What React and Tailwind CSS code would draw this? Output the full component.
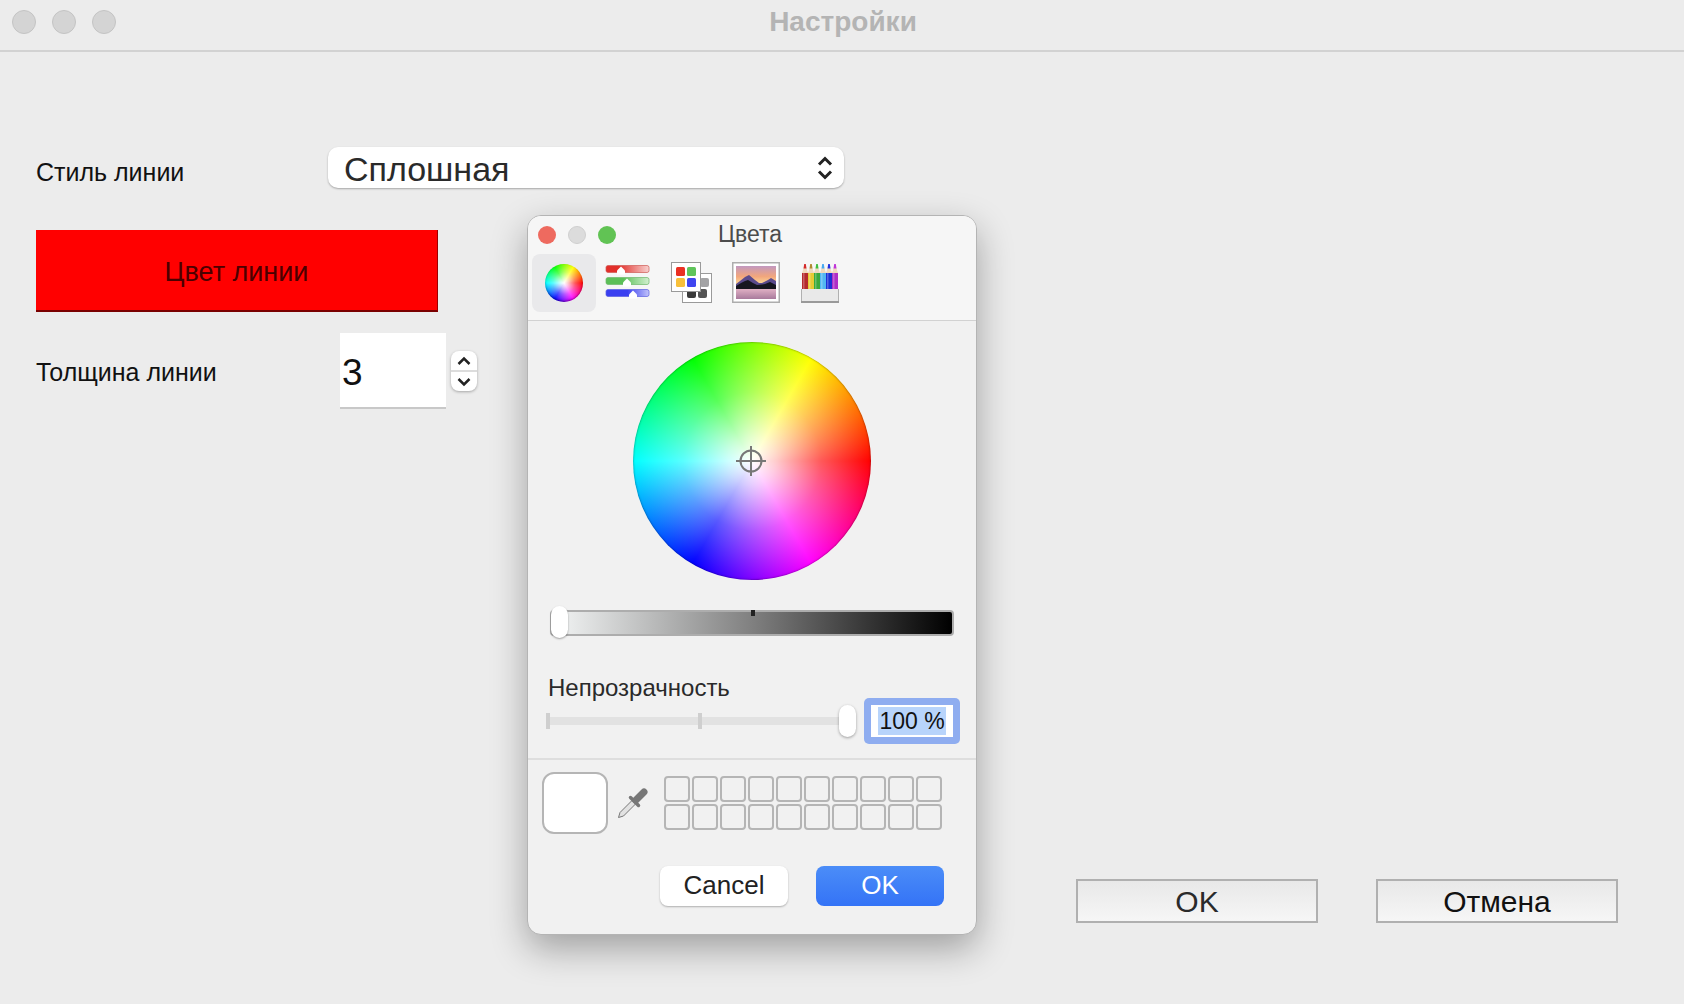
import React from "react";

const WHEEL =
  "bg-[radial-gradient(circle_closest-side,#ffffff_0%,rgba(255,255,255,0.8)_20%,rgba(255,255,255,0.35)_58%,rgba(255,255,255,0)_100%),conic-gradient(from_90deg,#ff0000,#ff00ff,#0000ff,#00ffff,#00ff00,#ffff00,#ff0000)]";

const Dot = ({ className }) => <div className={`rounded-full ${className}`} />;

const SliderIcon = () => (
  <svg width="46" height="36" viewBox="0 0 46 36" className="block">
    <defs>
      <linearGradient id="sr" x1="0" x2="1" y1="0" y2="0">
        <stop offset="0.3" stopColor="#e22f2a" />
        <stop offset="1" stopColor="#f8d2d0" />
      </linearGradient>
      <linearGradient id="sg" x1="0" x2="1" y1="0" y2="0">
        <stop offset="0.4" stopColor="#5cbf58" />
        <stop offset="1" stopColor="#d2f0d0" />
      </linearGradient>
      <linearGradient id="sb" x1="0" x2="1" y1="0" y2="0">
        <stop offset="0.5" stopColor="#3a3ff0" />
        <stop offset="1" stopColor="#c2c4fa" />
      </linearGradient>
    </defs>
    <rect x="1" y="1.500" width="43" height="7" rx="2" fill="url(#sr)" stroke="#cf5a55" strokeWidth="0.7" />
    <rect x="1" y="13.500" width="43" height="7" rx="2" fill="url(#sg)" stroke="#6fb86b" strokeWidth="0.7" />
    <rect x="1" y="25.500" width="43" height="7" rx="2" fill="url(#sb)" stroke="#5a5ee0" strokeWidth="0.7" />
    <path d="M16 2.500l4 4v4h-8v-4z" fill="#fff" />
    <path d="M22 14.500l4 4v4h-8v-4z" fill="#fff" />
    <path d="M28 26.500l4 4v4h-8v-4z" fill="#fff" />
  </svg>
);

const PaletteIcon = () => (
  <svg width="42" height="41" viewBox="0 0 42 41" className="block">
    <rect x="11.500" y="11.500" width="29" height="29" fill="#fff" stroke="#9a9a9a" />
    <rect x="29" y="16" width="9" height="9" rx="2" fill="#a3a3a5" />
    <rect x="16" y="27" width="9" height="9" rx="2" fill="#3a3a3a" />
    <rect x="27" y="27" width="9" height="9" rx="2" fill="#555" />
    <rect x="0.500" y="0.500" width="29" height="29" fill="#fff" stroke="#9a9a9a" />
    <rect x="5" y="5" width="9" height="9" rx="1.500" fill="#ea3023" />
    <rect x="16" y="5" width="9" height="9" rx="1.500" fill="#5fc45a" />
    <rect x="5" y="16" width="9" height="9" rx="1.500" fill="#f8c03a" />
    <rect x="16" y="16" width="9" height="9" rx="1.500" fill="#3f45f0" />
  </svg>
);

const LandscapeIcon = () => (
  <svg width="48" height="41" viewBox="0 0 48 41" className="block">
    <defs>
      <linearGradient id="sky" x1="0" x2="0" y1="0" y2="1">
        <stop offset="0" stopColor="#c298c0" />
        <stop offset="0.55" stopColor="#f2a67c" />
        <stop offset="1" stopColor="#ffe09a" />
      </linearGradient>
      <linearGradient id="lake" x1="0" x2="0" y1="0" y2="1">
        <stop offset="0" stopColor="#e0b0c4" />
        <stop offset="1" stopColor="#a87a9c" />
      </linearGradient>
    </defs>
    <rect x="0.750" y="0.750" width="46.500" height="39.500" fill="#fff" stroke="#adadad" strokeWidth="1.500" />
    <rect x="4" y="4" width="40" height="19" fill="url(#sky)" />
    <path d="M4 22l4-3 5-4 4-2 6 5 4 3 3 0 6-3 3-2 5 3v7H4z" fill="#5a4a8c" />
    <path d="M4 24l5-3 4-2 3-1 5 3 4 2 8-1 5-2 6 3v4H4z" fill="#16161f" />
    <rect x="4" y="27" width="40" height="10" fill="url(#lake)" />
  </svg>
);

const PencilsIcon = () => {
  const colors = [
    ["#b52a2c", "#d42a2a"],
    ["#e6cb33", "#b08a30"],
    ["#3aa93c", "#3fbf3f"],
    ["#52b7f2", "#45a8f0"],
    ["#1c30d6", "#2230e0"],
    ["#ae2ec6", "#c035d8"],
  ];
  return (
    <svg width="38" height="40" viewBox="0 0 38 40" className="block">
      {colors.map(([body, lead], i) => {
        const x = i * 6 + 1;
        return (
          <g key={body}>
            <path d={`M${x} 10L${x + 2} 4h2L${x + 6} 10z`} fill="#efd9bc" />
            <path d={`M${x + 1.500} 5.500L${x + 2.200} 1h1.600L${x + 4.500} 5.500z`} fill={lead} />
            <rect x={x} y="10" width="6" height="17" fill={body} />
            <rect x={x + 1} y="10" width="1.500" height="17" fill="#fff" opacity="0.25" />
          </g>
        );
      })}
      <rect x="0.500" y="26" width="37" height="13" fill="#e9e9e9" />
      <path d="M0.500 26v13h37V26" fill="none" stroke="#b0b0b0" />
      <rect x="0" y="38" width="38" height="2" fill="#9a9a9a" />
    </svg>
  );
};

const Dropper = () => (
  <svg width="32" height="32" viewBox="0 0 32 32" className="block">
    <path d="M1.500 30.500L3 25.500 15 13.500l3.500 3.500-12 12z" fill="#e2e2e2" stroke="#777" strokeWidth="1" />
    <path d="M13.500 10.500l8 8" stroke="#777" strokeWidth="3.500" strokeLinecap="round" />
    <path d="M19 13l8-8" stroke="#777" strokeWidth="7" strokeLinecap="round" />
  </svg>
);

const Crosshair = () => (
  <svg width="32" height="32" viewBox="0 0 32 32" className="block">
    <circle cx="16" cy="16" r="10.500" fill="none" stroke="#777" strokeWidth="2" />
    <path d="M1 16h30M16 1v30" stroke="#777" strokeWidth="2" />
  </svg>
);

const ColorPanel = () => (
  <div className="absolute left-[527px] top-[215px] flex h-[720px] w-[450px] flex-col overflow-hidden rounded-[14px] border border-[#b4b4b4] bg-[#f1f1f1] shadow-[0_14px_36px_rgba(0,0,0,0.32)]">
    <div className="h-[105px] shrink-0 border-b border-b-[#d2d2d2] bg-[#f6f6f6]">
      <div className="relative flex h-[38px] items-center pl-[10px]">
        <div className="flex gap-[12px]">
          <Dot className="h-[18px] w-[18px] bg-[#ee6a5f]" />
          <Dot className="h-[18px] w-[18px] bg-[#dcdcdc] border border-[#cfcfcf]" />
          <Dot className="h-[18px] w-[18px] bg-[#61c354]" />
        </div>
        <div className="absolute inset-x-0 top-[5px] pr-[4px] text-center text-[23px] leading-[26px] text-[#4c4c4c]">
          Цвета
        </div>
      </div>
      <div className="flex h-[58px] items-start pl-[4px]">
        <div className="flex h-[58px] w-[64px] items-center justify-center rounded-[8px] bg-[#e9e9eb]">
          <div className={`h-[38px] w-[38px] rounded-full ${WHEEL} shadow-[inset_0_-1px_2px_rgba(0,0,0,0.4)]`} />
        </div>
        <div className="ml-[9px] mt-[10px]">
          <SliderIcon />
        </div>
        <div className="ml-[20px] mt-[8px]">
          <PaletteIcon />
        </div>
        <div className="ml-[19px] mt-[8px]">
          <LandscapeIcon />
        </div>
        <div className="ml-[21px] mt-[9px]">
          <PencilsIcon />
        </div>
      </div>
    </div>

    <div className="flex justify-center pt-[21px]">
      <div className={`flex h-[238px] w-[238px] items-center justify-center rounded-full pr-[2px] ${WHEEL} shadow-[inset_0_0_2px_rgba(0,0,0,0.6)]`}>
        <Crosshair />
      </div>
    </div>

    <div className="relative ml-[22px] mt-[30px] h-[26px] w-[404px] rounded-[4px] border-2 border-[#adadad] bg-[linear-gradient(to_right,#f4f6f6,#808080_50%,#000000)]">
      <div className="absolute -left-[1px] -top-[6px] h-[32px] w-[17px] rounded-full bg-white shadow-[0_1px_2px_rgba(0,0,0,0.35)]" />
      <div className="absolute left-[199px] -top-[2px] h-[6px] w-[4px] bg-[#222]" />
    </div>

    <div className="ml-[20px] mt-[39px] text-[24px] leading-[26px] text-[#2a2a2a]">Непрозрачность</div>

    <div className="-mt-[3px] flex items-center pl-[18px]">
      <div className="relative h-[8px] w-[310px] bg-[#e2e2e2]">
        <div className="absolute left-0 -top-[4px] h-[16px] w-[4px] bg-[#cfcfcf]" />
        <div className="absolute left-[152px] -top-[4px] h-[16px] w-[4px] bg-[#cfcfcf]" />
        <div className="absolute right-0 -top-[12px] h-[32px] w-[17px] rounded-full bg-white shadow-[0_1px_3px_rgba(0,0,0,0.35)]" />
      </div>
      <div className="ml-[8px] rounded-[5px] bg-[#8fadf0] p-[7px]">
        <div className="flex h-[32px] w-[82px] items-center justify-center bg-white">
          <span className="bg-[#b8d4fb] px-[1px] text-[23px] leading-[28px] text-[#111]">100 %</span>
        </div>
      </div>
    </div>

    <div className="mt-[14px] border-b-2 border-b-[#dedede]" />

    <div className="flex items-center pl-[14px] pt-[12px]">
      <div className="h-[62px] w-[66px] rounded-[12px] border-2 border-[#b5b5b5] bg-white" />
      <div className="ml-[9px]">
        <Dropper />
      </div>
      <div className="ml-[15px] grid grid-cols-[repeat(10,26px)] gap-[2px]">
        {Array.from({ length: 20 }).map((_, i) => (
          <div key={i} className="h-[26px] rounded-[4px] border-2 border-[#b5b5b5]" />
        ))}
      </div>
    </div>

    <div className="mt-[32px] flex justify-end gap-[28px] pr-[32px]">
      <div className="flex h-[40px] w-[128px] items-center justify-center rounded-[8px] bg-white pb-[1px] text-[26px] text-[#222] shadow-[0_1px_2px_rgba(0,0,0,0.28)]">
        Cancel
      </div>
      <div className="flex h-[40px] w-[128px] items-center justify-center rounded-[8px] bg-[linear-gradient(to_bottom,#4b8df8,#3473f6)] pb-[1px] text-[26px] text-white">
        OK
      </div>
    </div>
  </div>
);

const App = () => {
  return (
    <div className="relative flex h-[1004px] w-[1684px] flex-col overflow-hidden bg-[#ececec] font-['Liberation_Sans',sans-serif]">
      <div className="flex h-[52px] shrink-0 items-center border-b-2 border-b-[#d2d2d2] pb-[6px] pl-[12px]">
        <div className="flex gap-[16px]">
          <Dot className="h-[24px] w-[24px] border border-[#c4c4c4] bg-[#d4d4d4]" />
          <Dot className="h-[24px] w-[24px] border border-[#c4c4c4] bg-[#d4d4d4]" />
          <Dot className="h-[24px] w-[24px] border border-[#c4c4c4] bg-[#d4d4d4]" />
        </div>
        <div className="flex-1 pr-[114px] text-center text-[28px] font-bold text-[#b4b4b4]">Настройки</div>
      </div>

      <div className="flex flex-1 flex-col pl-[36px]">
        <div className="mt-[95px] flex h-[41px] items-center">
          <div className="w-[292px] pt-[10px] text-[25px] text-[#111]">Стиль линии</div>
          <div className="flex h-[41px] w-[516px] items-center justify-between rounded-[10px] bg-white pl-[16px] pr-[10px] shadow-[0_1px_2px_rgba(0,0,0,0.3)]">
            <span className="pt-[3px] text-[34px] leading-[41px] text-[#2a2a2a]">Сплошная</span>
            <svg width="18" height="26" viewBox="0 0 18 26" className="block">
              <path d="M3 9.500l6-6 6 6M3 16.500l6 6 6-6" fill="none" stroke="#222" strokeWidth="3" />
            </svg>
          </div>
        </div>

        <div className="mt-[42px] flex h-[82px] w-[402px] items-center justify-center border-b-2 border-r border-b-[#7a0000] border-r-[#9a0000] bg-[#ff0000] pt-[5px] text-[27px] text-[#4a0000]">
          Цвет линии
        </div>

        <div className="mt-[21px] flex h-[76px] items-center">
          <div className="w-[304px] pt-[3px] text-[25px] text-[#111]">Толщина линии</div>
          <div className="flex h-[76px] w-[106px] items-center border-b-2 border-b-[#c8c8c8] bg-white pl-[2px] pt-[6px] text-[37px] text-[#111]">3</div>
          <div className="ml-[5px] flex h-[40px] w-[26px] flex-col rounded-[8px] bg-white shadow-[0_1px_3px_rgba(0,0,0,0.3)]">
            <div className="flex flex-1 items-center justify-center border-b-2 border-b-[#dcdcdc]">
              <svg width="16" height="10" viewBox="0 0 16 10" className="block">
                <path d="M2.500 8l5.500-5.500L13.500 8" fill="none" stroke="#222" strokeWidth="2.500" />
              </svg>
            </div>
            <div className="flex flex-1 items-center justify-center">
              <svg width="16" height="10" viewBox="0 0 16 10" className="block">
                <path d="M2.500 2L8 7.500 13.500 2" fill="none" stroke="#222" strokeWidth="2.500" />
              </svg>
            </div>
          </div>
        </div>

        <div className="mt-auto flex justify-end gap-[58px] pb-[81px] pr-[66px]">
          <div className="flex h-[44px] w-[242px] items-center justify-center border-2 border-[#b0b0b0] bg-[linear-gradient(to_bottom,#e8e8e8,#f6f6f6)] text-[30px] text-[#2a2a2a]">
            OK
          </div>
          <div className="flex h-[44px] w-[242px] items-center justify-center border-2 border-[#b0b0b0] bg-[linear-gradient(to_bottom,#e8e8e8,#f6f6f6)] text-[30px] text-[#111]">
            Отмена
          </div>
        </div>
      </div>

      <ColorPanel />
    </div>
  );
};

export default App;
